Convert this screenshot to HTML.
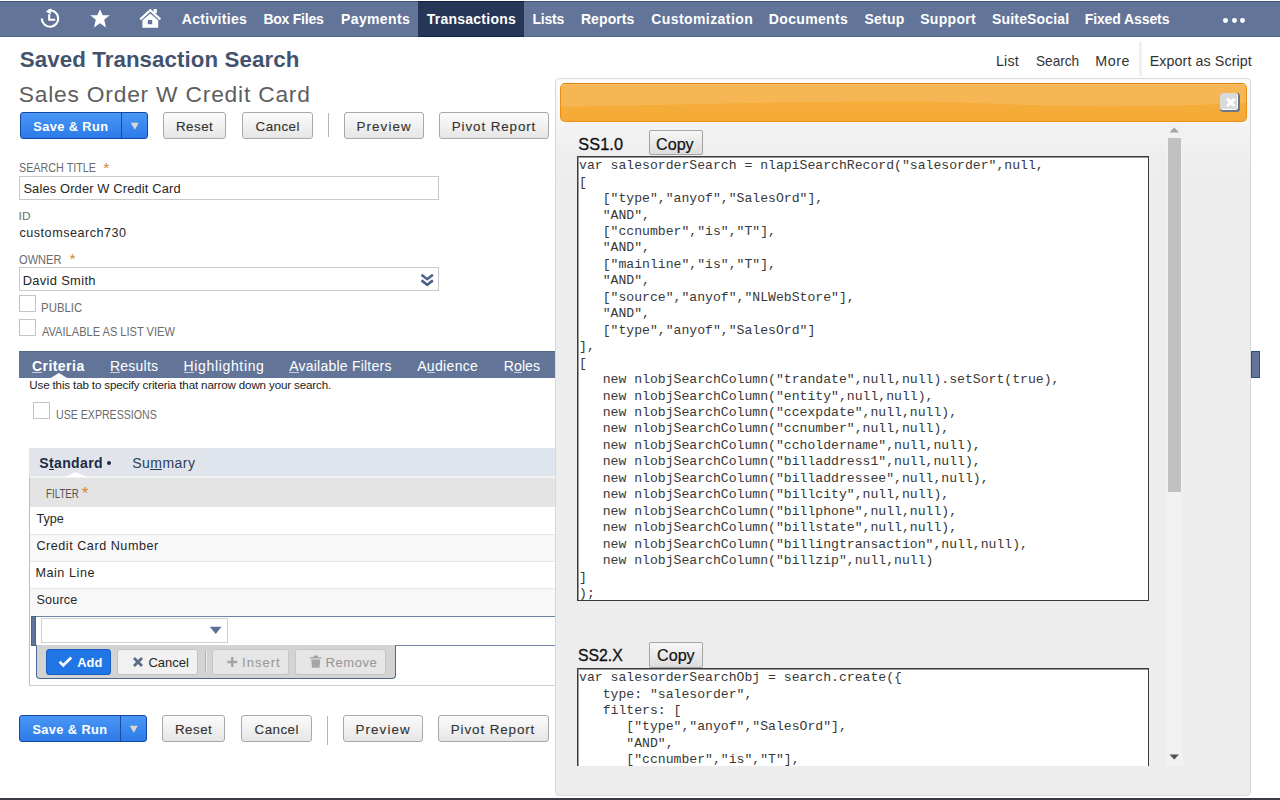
<!DOCTYPE html>
<html><head><meta charset="utf-8"><title>Saved Transaction Search</title>
<style>
*{margin:0;padding:0;box-sizing:border-box}
html,body{width:1280px;height:800px;overflow:hidden;background:#fff;font-family:"Liberation Sans",sans-serif}
.a{position:absolute}
.t{position:absolute;white-space:pre}
.nav{left:0;top:1px;width:1280px;height:36px;background:#627599;border-top:1px solid #40557a;border-bottom:1px solid #56698d}
.navsel{left:418px;top:1px;width:106px;height:36px;background:#253657;border-top:1px solid #0f1c38;border-bottom:1px solid #15244a}
.dot{width:4.8px;height:4.8px;border-radius:50%;background:#fff;top:18.4px}
.btn{position:absolute;height:27px;border:1px solid #a8a8a8;border-radius:3px;background:linear-gradient(#fbfbfb,#e6e6e6)}
.bbtn{position:absolute;height:27px;border:1px solid #1446a8;border-radius:3px;background:linear-gradient(#4a96f5,#2c7be8)}
.sep{position:absolute;width:1px;background:#b5b5b5}
.inp{position:absolute;border:1px solid #c9c9c9;background:#fff}
.cb{position:absolute;width:17px;height:17px;border:1px solid #c4c4c4;background:#fff}
.ul{position:absolute;height:1px;background:#fff}
.panel{left:555px;top:78px;width:696px;height:718px;background:linear-gradient(#fbfbfb 0px,#f4f4f4 45px,#eeeeee 75px,#ededed 100px);border:1px solid #d9d9d9;border-radius:4px}
.code{position:absolute;white-space:pre;font-family:"Liberation Mono",monospace;font-size:13.13px;line-height:16.45px;color:#383838}
.ta{position:absolute;background:#fff;border:1px solid #3a3a3a;box-shadow:inset 1px 1px 0 #9a9a9a}
.copy{position:absolute;border:1px solid #a5a5a5;border-radius:2px;background:linear-gradient(#f7f7f7,#dddddd)}
</style></head><body>
<!-- NAV -->
<div class="a nav"></div>
<div class="a navsel"></div>
<svg class="a" style="left:0;top:0" width="170" height="38" viewBox="0 0 170 38">
  <g fill="none" stroke="#fff" stroke-width="2.1">
    <path d="M41.8 18.6 A8.2 8.2 0 1 0 48.5 10.5"/>
    <path d="M49.2 14.3 V19.7 H55.2" stroke-width="2.1"/>
  </g>
  <path d="M45.8 11.4 L50.8 8.3 L50.8 14.3 Z" fill="#fff"/>
  <path d="M100 9.2 L102.7 15.2 L109.7 15.3 L104.2 19.8 L106 27.4 L100 23.3 L94 27.4 L95.8 19.8 L90.3 15.3 L97.3 15.2 Z" fill="#fff"/>
  <path d="M140.2 19.4 L150.3 10.2 L160.4 19.4" fill="none" stroke="#fff" stroke-width="2.1" stroke-linejoin="miter"/>
  <rect x="153.6" y="9" width="3.2" height="4.2" fill="#fff"/>
  <path d="M142.4 20.2 L150.3 13.4 L158.2 20.2 V27.8 H142.4 Z M147.8 19.9 V24.3 H152.2 V19.9 Z" fill="#fff" fill-rule="evenodd"/>
</svg>
<div class="a dot" style="left:1223.4px"></div>
<div class="a dot" style="left:1231.9px"></div>
<div class="a dot" style="left:1240.2px"></div>

<!-- TOP BUTTONS -->
<div class="bbtn" style="left:20px;top:112px;width:128px"></div>
<div class="a" style="left:121px;top:113px;width:1px;height:25px;background:#1d4a9c"></div>
<svg class="a" style="left:130px;top:122px" width="10" height="9"><path d="M0.8 0.7 H8.8 L4.8 7.8 Z" fill="#ddd6cf"/></svg>
<div class="btn" style="left:163px;top:112px;width:63px"></div>
<div class="btn" style="left:242px;top:112px;width:71px"></div>
<div class="sep" style="left:328px;top:113px;height:24px"></div>
<div class="btn" style="left:344px;top:112px;width:80px"></div>
<div class="btn" style="left:439px;top:112px;width:110px"></div>

<!-- FIELDS -->
<div class="inp" style="left:19px;top:176px;width:420px;height:24px"></div>
<div class="inp" style="left:19px;top:267px;width:420px;height:24px"></div>
<svg class="a" style="left:420px;top:272.8px" width="15" height="15" viewBox="0 0 15 15"><path d="M1.5 1.8 L7.2 6.2 L12.9 1.8 M1.5 7.4 L7.2 11.8 L12.9 7.4" fill="none" stroke="#4a6288" stroke-width="2.6"/></svg>
<div class="cb" style="left:19px;top:295px"></div>
<div class="cb" style="left:19px;top:319px"></div>

<!-- TAB BAR -->
<div class="a" style="left:19px;top:351px;width:1241px;height:27px;background:#627599;border-top:1px solid #54688c"></div>
<svg class="a" style="left:48px;top:370px" width="22" height="8"><path d="M2.7 8 L10.9 3 L19.1 8 Z" fill="#fff"/></svg>
<div class="cb" style="left:33px;top:402px"></div>

<!-- SUBTABS -->
<div class="a" style="left:29px;top:448px;width:1221px;height:28px;background:#dfe5ef"></div>
<div class="a" style="left:29px;top:448px;width:177px;height:28px;background:#e1e5eb"></div>
<div class="a" style="left:29px;top:476px;width:1221px;height:2px;background:#f2f2f2"></div>
<div class="a" style="left:106.7px;top:461px;width:4px;height:4px;border-radius:50%;background:#1c2a44"></div>
<svg class="a" style="left:62px;top:470px" width="28" height="8"><path d="M3 7 L13.5 2 L24.8 7 Z" fill="#fff"/></svg>

<!-- TABLE -->
<div class="a" style="left:29px;top:477px;width:1px;height:209px;background:#bcbcbc"></div>
<div class="a" style="left:30px;top:478px;width:1220px;height:29px;background:#e4e4e4"></div>
<div class="a" style="left:30px;top:507px;width:1220px;height:27px;background:#fff"></div>
<div class="a" style="left:30px;top:534px;width:1220px;height:1px;background:#e6e6e6"></div>
<div class="a" style="left:30px;top:535px;width:1220px;height:26px;background:#f8f8f8"></div>
<div class="a" style="left:30px;top:561px;width:1220px;height:1px;background:#e6e6e6"></div>
<div class="a" style="left:30px;top:562px;width:1220px;height:26px;background:#fff"></div>
<div class="a" style="left:30px;top:588px;width:1220px;height:1px;background:#e6e6e6"></div>
<div class="a" style="left:30px;top:589px;width:1220px;height:27px;background:#f8f8f8"></div>
<!-- edit row -->
<div class="a" style="left:31px;top:616px;width:1219px;height:30px;background:#fff;border-top:1px solid #6f84a6;border-bottom:1px solid #6f84a6"></div>
<div class="a" style="left:31px;top:616px;width:5px;height:30px;background:#5d759c;border:1px solid #4a6189"></div>
<div class="inp" style="left:41px;top:618px;width:187px;height:25px;border-color:#cfcfcf"></div>
<svg class="a" style="left:209px;top:626px" width="14" height="9"><path d="M0.8 0.8 H12.6 L6.7 8 Z" fill="#5a7197"/></svg>
<div class="a" style="left:36px;top:645px;width:360px;height:34px;background:#d3d3d3;border-left:1px solid #4f668e;border-bottom:1px solid #4f668e;border-radius:0 0 4px 4px;border-right:1px solid #4f668e"></div>
<div class="a" style="left:46px;top:649px;width:65px;height:26px;background:#2176e6;border:1px solid #1a5cc2;border-radius:3px"></div>
<svg class="a" style="left:58px;top:656px" width="15" height="12"><path d="M1.6 5.8 L5.3 9.4 L13.2 1.6" fill="none" stroke="#fff" stroke-width="2.8"/></svg>
<div class="a" style="left:117px;top:649px;width:81px;height:26px;background:#f1f1f1;border:1px solid #c2c2c2;border-radius:3px"></div>
<svg class="a" style="left:132px;top:656px" width="12" height="12"><path d="M2 2 L10 10 M10 2 L2 10" fill="none" stroke="#5a6b85" stroke-width="2.8"/></svg>
<div class="a" style="left:205px;top:651px;width:1px;height:22px;background:#b3b3b3"></div>
<div class="a" style="left:206px;top:651px;width:1px;height:22px;background:#eaeaea"></div>
<div class="a" style="left:212px;top:649px;width:77px;height:26px;background:#e6e6e6;border:1px solid #c6c6c6;border-radius:3px"></div>
<svg class="a" style="left:226px;top:656px" width="13" height="12"><path d="M6.3 1 V11 M1.3 6 H11.3" fill="none" stroke="#a5a5a5" stroke-width="2.4"/></svg>
<div class="a" style="left:295px;top:649px;width:91px;height:26px;background:#e6e6e6;border:1px solid #c6c6c6;border-radius:3px"></div>
<svg class="a" style="left:309px;top:654px" width="14" height="15"><path d="M1 3.2 H12.5 V4.6 H1 Z M4.5 1.5 H9 V3.2 H4.5 Z M2.2 5.4 H11.3 L10.5 13.8 H3 Z" fill="#a5a5a5"/></svg>
<div class="a" style="left:29px;top:685px;width:1221px;height:1px;background:#cfcfcf"></div>

<!-- BOTTOM BUTTONS -->
<div class="bbtn" style="left:19px;top:715px;width:128px"></div>
<div class="a" style="left:120px;top:716px;width:1px;height:25px;background:#1d4a9c"></div>
<svg class="a" style="left:129px;top:725px" width="10" height="9"><path d="M0.8 0.7 H8.8 L4.8 7.8 Z" fill="#ddd6cf"/></svg>
<div class="btn" style="left:162px;top:715px;width:63px"></div>
<div class="btn" style="left:241px;top:715px;width:71px"></div>
<div class="sep" style="left:327px;top:716px;height:29px"></div>
<div class="btn" style="left:343px;top:715px;width:80px"></div>
<div class="btn" style="left:438px;top:715px;width:111px"></div>

<!-- RIGHT TOP LINKS -->
<div class="a" style="left:1139px;top:42px;width:3px;height:34px;background:#f0f0f0"></div>

<!-- blue tab edge right -->
<div class="a" style="left:1251px;top:351px;width:9px;height:27px;background:#627599;border:1px solid #2f4b7c"></div>

<!-- PANEL -->
<div class="a panel"></div>
<div class="a" style="left:560px;top:83px;width:687px;height:39px;border:1px solid #ea9019;border-top-color:#e07e12;border-radius:5px;overflow:hidden;background:linear-gradient(#f6ae3c,#f5aa35)"><svg class="a" style="left:0;top:0" width="685" height="37"><path d="M0,0 H685 V19 C620,22 560,22.5 515,22 C440,21 400,17.5 340,17.5 C220,17.5 120,21 0,22.6 Z" fill="#f7b654"/><rect x="0" y="0" width="685" height="1.2" fill="#f9c068"/></svg></div>
<div class="a" style="left:1220px;top:93px;width:20px;height:19px;background:#6d7687;border-radius:3px"></div>
<div class="a" style="left:1220px;top:93px;width:18px;height:17px;background:#dadada;border-right:1px solid #fff;border-bottom:1px solid #fff;border-radius:3px"></div>
<svg class="a" style="left:1225px;top:97px" width="12" height="11"><path d="M2.2 1.8 L9.6 9.2 M9.6 1.8 L2.2 9.2" fill="none" stroke="#fff" stroke-width="3"/></svg>
<div class="a" style="left:556px;top:122px;width:694px;height:644px;overflow:hidden">
    <div class="copy" style="left:92.5px;top:8px;width:54px;height:25px"></div>
  <div class="ta" style="left:21px;top:34px;width:572px;height:445px"></div>
  <div class="copy" style="left:92.5px;top:520px;width:54px;height:26px"></div>
  <div class="ta" style="left:21px;top:546px;width:572px;height:200px"></div>
  <div class="a" style="left:610px;top:0;width:17px;height:644px;background:#f1f1f1"></div>
  <div class="a" style="left:612px;top:16px;width:13px;height:354px;background:#c1c1c1"></div>
  <div class="code" style="left:23px;top:36.2px">var salesorderSearch = nlapiSearchRecord(&quot;salesorder&quot;,null,
[
   [&quot;type&quot;,&quot;anyof&quot;,&quot;SalesOrd&quot;], 
   &quot;AND&quot;, 
   [&quot;ccnumber&quot;,&quot;is&quot;,&quot;T&quot;], 
   &quot;AND&quot;, 
   [&quot;mainline&quot;,&quot;is&quot;,&quot;T&quot;], 
   &quot;AND&quot;, 
   [&quot;source&quot;,&quot;anyof&quot;,&quot;NLWebStore&quot;], 
   &quot;AND&quot;, 
   [&quot;type&quot;,&quot;anyof&quot;,&quot;SalesOrd&quot;]
], 
[
   new nlobjSearchColumn(&quot;trandate&quot;,null,null).setSort(true), 
   new nlobjSearchColumn(&quot;entity&quot;,null,null), 
   new nlobjSearchColumn(&quot;ccexpdate&quot;,null,null), 
   new nlobjSearchColumn(&quot;ccnumber&quot;,null,null), 
   new nlobjSearchColumn(&quot;ccholdername&quot;,null,null), 
   new nlobjSearchColumn(&quot;billaddress1&quot;,null,null), 
   new nlobjSearchColumn(&quot;billaddressee&quot;,null,null), 
   new nlobjSearchColumn(&quot;billcity&quot;,null,null), 
   new nlobjSearchColumn(&quot;billphone&quot;,null,null), 
   new nlobjSearchColumn(&quot;billstate&quot;,null,null), 
   new nlobjSearchColumn(&quot;billingtransaction&quot;,null,null), 
   new nlobjSearchColumn(&quot;billzip&quot;,null,null)
]
);</div>
  <div class="code" style="left:23px;top:548.1px">var salesorderSearchObj = search.create({
   type: &quot;salesorder&quot;,
   filters: [
      [&quot;type&quot;,&quot;anyof&quot;,&quot;SalesOrd&quot;], 
      &quot;AND&quot;, 
      [&quot;ccnumber&quot;,&quot;is&quot;,&quot;T&quot;], 
      &quot;AND&quot;, </div>
  <svg class="a" style="left:613px;top:5px" width="11" height="6"><path d="M0.5 5.5 H10 L5.25 0.5 Z" fill="#a3a3a3"/></svg>
  <svg class="a" style="left:613px;top:632px" width="11" height="6"><path d="M0.5 0.5 H10 L5.25 5.5 Z" fill="#505050"/></svg>
</div>
<div class="t" style='left:181.75px;top:11.75px;font:bold 14px "Liberation Sans", sans-serif;line-height:14px;color:#fff;letter-spacing:0.310px'>Activities</div>
<div class="t" style='left:263.40px;top:11.75px;font:bold 14px "Liberation Sans", sans-serif;line-height:14px;color:#fff;letter-spacing:-0.232px'>Box Files</div>
<div class="t" style='left:341.00px;top:11.75px;font:bold 14px "Liberation Sans", sans-serif;line-height:14px;color:#fff;letter-spacing:0.377px'>Payments</div>
<div class="t" style='left:426.70px;top:11.75px;font:bold 14px "Liberation Sans", sans-serif;line-height:14px;color:#fff;letter-spacing:0.247px'>Transactions</div>
<div class="t" style='left:532.50px;top:11.75px;font:bold 14px "Liberation Sans", sans-serif;line-height:14px;color:#fff;letter-spacing:-0.222px'>Lists</div>
<div class="t" style='left:580.90px;top:11.75px;font:bold 14px "Liberation Sans", sans-serif;line-height:14px;color:#fff;letter-spacing:0.098px'>Reports</div>
<div class="t" style='left:651.20px;top:11.75px;font:bold 14px "Liberation Sans", sans-serif;line-height:14px;color:#fff;letter-spacing:0.426px'>Customization</div>
<div class="t" style='left:768.80px;top:11.75px;font:bold 14px "Liberation Sans", sans-serif;line-height:14px;color:#fff;letter-spacing:0.344px'>Documents</div>
<div class="t" style='left:864.40px;top:11.75px;font:bold 14px "Liberation Sans", sans-serif;line-height:14px;color:#fff;letter-spacing:0.253px'>Setup</div>
<div class="t" style='left:920.20px;top:11.75px;font:bold 14px "Liberation Sans", sans-serif;line-height:14px;color:#fff;letter-spacing:0.301px'>Support</div>
<div class="t" style='left:992.00px;top:11.75px;font:bold 14px "Liberation Sans", sans-serif;line-height:14px;color:#fff;letter-spacing:0.172px'>SuiteSocial</div>
<div class="t" style='left:1084.70px;top:11.75px;font:bold 14px "Liberation Sans", sans-serif;line-height:14px;color:#fff;letter-spacing:-0.099px'>Fixed Assets</div>
<div class="t" style='left:19.75px;top:48.60px;font:bold 22.3px "Liberation Sans", sans-serif;line-height:22.3px;color:#43536d;letter-spacing:0.086px'>Saved Transaction Search</div>
<div class="t" style='left:18.75px;top:82.90px;font:normal 22.8px "Liberation Sans", sans-serif;line-height:22.8px;color:#5e5e5e;letter-spacing:0.782px'>Sales Order W Credit Card</div>
<div class="t" style='left:33.20px;top:121.00px;font:bold 12.8px "Liberation Sans", sans-serif;line-height:12.8px;color:#fff;letter-spacing:0.411px'>Save &amp; Run</div>
<div class="t" style='left:175.90px;top:120.00px;font:normal 13.4px "Liberation Sans", sans-serif;line-height:13.4px;color:#333;letter-spacing:0.485px;-webkit-text-stroke:0.12px #333'>Reset</div>
<div class="t" style='left:255.60px;top:120.00px;font:normal 13.4px "Liberation Sans", sans-serif;line-height:13.4px;color:#333;letter-spacing:0.419px;-webkit-text-stroke:0.12px #333'>Cancel</div>
<div class="t" style='left:356.50px;top:120.00px;font:normal 13.4px "Liberation Sans", sans-serif;line-height:13.4px;color:#333;letter-spacing:1.091px;-webkit-text-stroke:0.12px #333'>Preview</div>
<div class="t" style='left:451.75px;top:120.00px;font:normal 13.4px "Liberation Sans", sans-serif;line-height:13.4px;color:#333;letter-spacing:0.899px;-webkit-text-stroke:0.12px #333'>Pivot Report</div>
<div class="t" style='left:32.40px;top:724.30px;font:bold 12.8px "Liberation Sans", sans-serif;line-height:12.8px;color:#fff;letter-spacing:0.400px'>Save &amp; Run</div>
<div class="t" style='left:174.90px;top:723.30px;font:normal 13.4px "Liberation Sans", sans-serif;line-height:13.4px;color:#333;letter-spacing:0.485px;-webkit-text-stroke:0.12px #333'>Reset</div>
<div class="t" style='left:254.60px;top:723.30px;font:normal 13.4px "Liberation Sans", sans-serif;line-height:13.4px;color:#333;letter-spacing:0.419px;-webkit-text-stroke:0.12px #333'>Cancel</div>
<div class="t" style='left:355.50px;top:723.30px;font:normal 13.4px "Liberation Sans", sans-serif;line-height:13.4px;color:#333;letter-spacing:1.091px;-webkit-text-stroke:0.12px #333'>Preview</div>
<div class="t" style='left:450.75px;top:723.30px;font:normal 13.4px "Liberation Sans", sans-serif;line-height:13.4px;color:#333;letter-spacing:0.899px;-webkit-text-stroke:0.12px #333'>Pivot Report</div>
<div class="t" style='left:19.20px;top:162.00px;font:normal 12.5px "Liberation Sans", sans-serif;line-height:12.5px;color:#6b6b6b;transform:scaleX(0.8615);transform-origin:0.00px 0'>SEARCH TITLE</div>
<div class="t" style='left:103.30px;top:159.60px;font:normal 15.5px "Liberation Sans", sans-serif;line-height:15.5px;color:#d4862a'>*</div>
<div class="t" style='left:23.40px;top:183.00px;font:normal 12.85px "Liberation Sans", sans-serif;line-height:12.85px;color:#262626;letter-spacing:0.154px'>Sales Order W Credit Card</div>
<div class="t" style='left:18.50px;top:210.80px;font:normal 11.8px "Liberation Sans", sans-serif;line-height:11.8px;color:#6b6b6b;letter-spacing:0.222px'>ID</div>
<div class="t" style='left:19.50px;top:226.80px;font:normal 12.6px "Liberation Sans", sans-serif;line-height:12.6px;color:#262626;letter-spacing:0.507px'>customsearch730</div>
<div class="t" style='left:19.30px;top:254.60px;font:normal 11.9px "Liberation Sans", sans-serif;line-height:11.9px;color:#6b6b6b;transform:scaleX(0.9328);transform-origin:0.00px 0'>OWNER</div>
<div class="t" style='left:69.60px;top:251.20px;font:normal 15.5px "Liberation Sans", sans-serif;line-height:15.5px;color:#d4862a'>*</div>
<div class="t" style='left:22.70px;top:274.80px;font:normal 12.9px "Liberation Sans", sans-serif;line-height:12.9px;color:#262626;letter-spacing:0.328px'>David Smith</div>
<div class="t" style='left:40.50px;top:301.80px;font:normal 12.4px "Liberation Sans", sans-serif;line-height:12.4px;color:#6b6b6b;transform:scaleX(0.9176);transform-origin:1.00px 0'>PUBLIC</div>
<div class="t" style='left:41.50px;top:325.50px;font:normal 12.4px "Liberation Sans", sans-serif;line-height:12.4px;color:#6b6b6b;transform:scaleX(0.8935);transform-origin:0.00px 0'>AVAILABLE AS LIST VIEW</div>
<div class="t" style='left:31.90px;top:358.80px;font:bold 14px "Liberation Sans", sans-serif;line-height:14px;color:#fff;letter-spacing:0.467px'>Criteria</div>
<div class="a" style="left:31.90px;top:372px;width:10.11px;height:1px;background:#c9cfda"></div>
<div class="t" style='left:110.00px;top:358.80px;font:normal 14px "Liberation Sans", sans-serif;line-height:14px;color:#fff;letter-spacing:0.220px'>Results</div>
<div class="a" style="left:110.00px;top:372px;width:10.11px;height:1px;background:#c9cfda"></div>
<div class="t" style='left:183.60px;top:358.80px;font:normal 14px "Liberation Sans", sans-serif;line-height:14px;color:#fff;letter-spacing:0.648px'>Highlighting</div>
<div class="a" style="left:183.60px;top:372px;width:10.11px;height:1px;background:#c9cfda"></div>
<div class="t" style='left:289.20px;top:358.80px;font:normal 14px "Liberation Sans", sans-serif;line-height:14px;color:#fff;letter-spacing:0.227px'>Available Filters</div>
<div class="a" style="left:289.20px;top:372px;width:9.34px;height:1px;background:#c9cfda"></div>
<div class="t" style='left:417.20px;top:358.80px;font:normal 14px "Liberation Sans", sans-serif;line-height:14px;color:#fff;letter-spacing:0.330px'>Audience</div>
<div class="a" style="left:426.87px;top:372px;width:7.79px;height:1px;background:#c9cfda"></div>
<div class="t" style='left:503.80px;top:358.80px;font:normal 14px "Liberation Sans", sans-serif;line-height:14px;color:#fff;letter-spacing:0.102px'>Roles</div>
<div class="a" style="left:514.01px;top:372px;width:7.79px;height:1px;background:#c9cfda"></div>
<div class="t" style='left:29.25px;top:379.40px;font:normal 11.6px "Liberation Sans", sans-serif;line-height:11.6px;color:#222;letter-spacing:-0.141px'>Use this tab to specify criteria that narrow down your search.</div>
<div class="t" style='left:55.75px;top:408.80px;font:normal 12.3px "Liberation Sans", sans-serif;line-height:12.3px;color:#6b6b6b;transform:scaleX(0.8619);transform-origin:0.00px 0'>USE EXPRESSIONS</div>
<div class="t" style='left:39.25px;top:455.50px;font:bold 14px "Liberation Sans", sans-serif;line-height:14px;color:#1c2a44;letter-spacing:0.375px'>Standard</div>
<div class="a" style="left:48.96px;top:469px;width:4.66px;height:1px;background:#1c2a44"></div>
<div class="t" style='left:132.20px;top:455.50px;font:normal 14px "Liberation Sans", sans-serif;line-height:14px;color:#2d3c58;letter-spacing:0.484px'>Summary</div>
<div class="a" style="left:150.29px;top:469px;width:11.66px;height:1px;background:#2d3c58"></div>
<div class="t" style='left:46.25px;top:489.40px;font:normal 11.9px "Liberation Sans", sans-serif;line-height:11.9px;color:#555;transform:scaleX(0.8212);transform-origin:0.00px 0'>FILTER</div>
<div class="t" style='left:81.80px;top:485.30px;font:normal 17px "Liberation Sans", sans-serif;line-height:17px;color:#d4862a'>*</div>
<div class="t" style='left:36.40px;top:513.25px;font:normal 12.6px "Liberation Sans", sans-serif;line-height:12.6px;color:#262626'>Type</div>
<div class="t" style='left:36.40px;top:539.80px;font:normal 12.6px "Liberation Sans", sans-serif;line-height:12.6px;color:#262626;letter-spacing:0.536px'>Credit Card Number</div>
<div class="t" style='left:35.40px;top:566.80px;font:normal 12.6px "Liberation Sans", sans-serif;line-height:12.6px;color:#262626;letter-spacing:0.562px'>Main Line</div>
<div class="t" style='left:36.40px;top:593.80px;font:normal 12.6px "Liberation Sans", sans-serif;line-height:12.6px;color:#262626;letter-spacing:0.200px'>Source</div>
<div class="t" style='left:77.25px;top:656.60px;font:bold 12.8px "Liberation Sans", sans-serif;line-height:12.8px;color:#fff;letter-spacing:0.096px'>Add</div>
<div class="t" style='left:148.50px;top:655.60px;font:normal 13px "Liberation Sans", sans-serif;line-height:13px;color:#262626;letter-spacing:-0.016px'>Cancel</div>
<div class="t" style='left:242.00px;top:655.60px;font:normal 13px "Liberation Sans", sans-serif;line-height:13px;color:#999;letter-spacing:1.020px;-webkit-text-stroke:0.1px #999'>Insert</div>
<div class="t" style='left:325.50px;top:655.60px;font:normal 13px "Liberation Sans", sans-serif;line-height:13px;color:#999;letter-spacing:0.585px;-webkit-text-stroke:0.1px #999'>Remove</div>
<div class="t" style='left:996.00px;top:53.75px;font:normal 14.3px "Liberation Sans", sans-serif;line-height:14.3px;color:#333;letter-spacing:0.158px'>List</div>
<div class="t" style='left:1035.50px;top:53.75px;font:normal 14.3px "Liberation Sans", sans-serif;line-height:14.3px;color:#333;transform:scaleX(0.9537);transform-origin:0.00px 0'>Search</div>
<div class="t" style='left:1095.25px;top:53.75px;font:normal 14.3px "Liberation Sans", sans-serif;line-height:14.3px;color:#333;letter-spacing:0.543px'>More</div>
<div class="t" style='left:1149.75px;top:53.75px;font:normal 14.3px "Liberation Sans", sans-serif;line-height:14.3px;color:#333;letter-spacing:0.071px'>Export as Script</div>
<div class="t" style='left:578.25px;top:135.50px;font:normal 16.3px "Liberation Sans", sans-serif;line-height:16.3px;color:#111;letter-spacing:0.113px;-webkit-text-stroke:0.3px #111'>SS1.0</div>
<div class="t" style='left:656.40px;top:136.50px;font:normal 16.7px "Liberation Sans", sans-serif;line-height:16.7px;color:#111;transform:scaleX(0.9669);transform-origin:0.00px 0;-webkit-text-stroke:0.2px #111'>Copy</div>
<div class="t" style='left:578.40px;top:646.50px;font:normal 16.3px "Liberation Sans", sans-serif;line-height:16.3px;color:#111;transform:scaleX(0.9698);transform-origin:0.00px 0;-webkit-text-stroke:0.3px #111'>SS2.X</div>
<div class="t" style='left:656.60px;top:648.00px;font:normal 16.7px "Liberation Sans", sans-serif;line-height:16.7px;color:#111;transform:scaleX(0.9669);transform-origin:0.00px 0;-webkit-text-stroke:0.2px #111'>Copy</div>
<div class="a" style="left:0;top:798px;width:1280px;height:2px;background:#3a3e44"></div>
</body></html>
